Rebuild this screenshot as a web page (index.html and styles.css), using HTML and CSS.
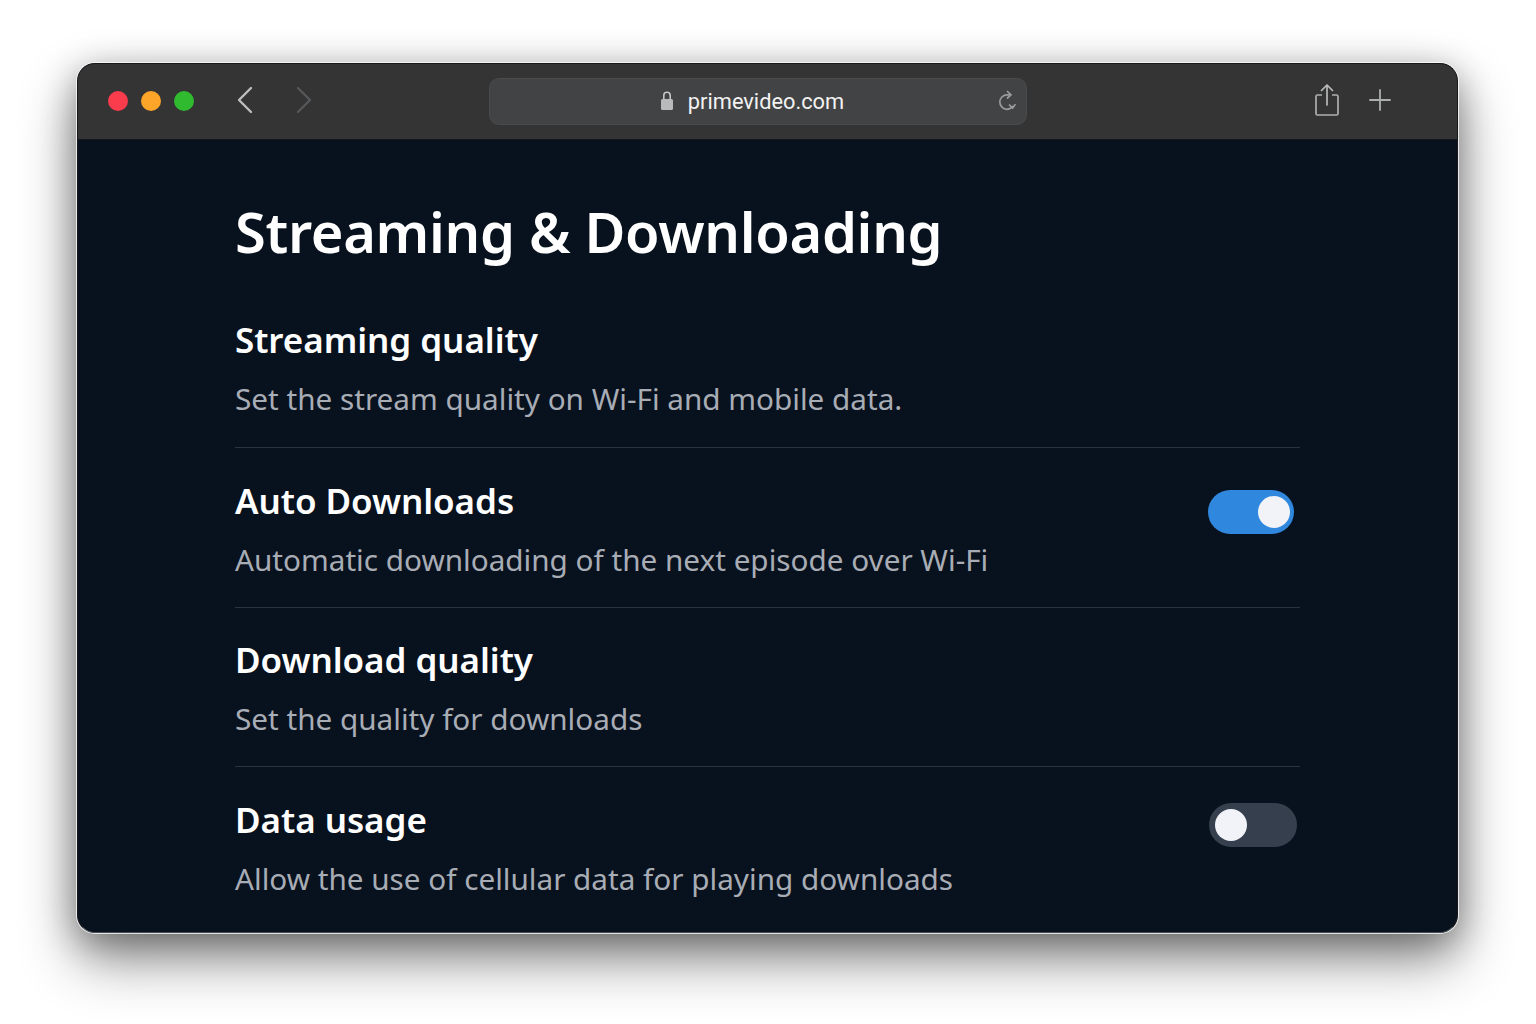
FILE: index.html
```html
<!DOCTYPE html>
<html lang="en">
<head>
<meta charset="utf-8">
<title>Streaming &amp; Downloading</title>
<link rel="stylesheet" href="styles.css">
</head>
<body>
<div class="window">
  <header class="toolbar">
    <div class="lights">
      <span class="light red"></span><span class="light yellow"></span><span class="light green"></span>
    </div>
    <div class="nav">
      <svg class="nav-icon" viewBox="0 0 18 30"><path d="M15 3 3 15l12 12" fill="none" stroke="#bcbdbe" stroke-width="2.4" stroke-linecap="round" stroke-linejoin="round"/></svg>
      <svg class="nav-icon" viewBox="0 0 18 30"><path d="M3 3l12 12L3 27" fill="none" stroke="#565758" stroke-width="2.4" stroke-linecap="round" stroke-linejoin="round"/></svg>
    </div>
    <div class="address">
      <div class="address-main">
        <svg class="lock" viewBox="0 0 14 20"><path d="M3.800 9V4.500a3.200 3.200 0 0 1 6.400 0V9" fill="none" stroke="#c4c5c6" stroke-width="1.600"/><rect x="1" y="8" width="12" height="11" rx="1.500" fill="#b9babb"/></svg>
        <span class="url">primevideo.com</span>
      </div>
      <svg class="reload" viewBox="0 0 20 24"><path d="M13.500 5.900H10A7.200 7.200 0 0 0 10 20.300a7 7 0 0 0 5.500-2.800" fill="none" stroke="#9a9b9c" stroke-width="1.700" stroke-linecap="round"/><path d="M10.500 2.500 14 5.900 10.500 9M12.500 16l3 3.200 2.500-3.400" fill="none" stroke="#9a9b9c" stroke-width="1.700" stroke-linecap="round" stroke-linejoin="round"/></svg>
    </div>
    <div class="actions">
      <svg class="share" viewBox="0 0 26 34"><path d="M8 12H3.500A1.500 1.500 0 0 0 2 13.500V30.500A1.500 1.500 0 0 0 3.500 32h19a1.500 1.500 0 0 0 1.500-1.500V13.500a1.500 1.500 0 0 0-1.500-1.500H18" fill="none" stroke="#adaeaf" stroke-width="1.700"/><path d="M13 22V2.500M7.500 7.500 13 2l5.500 5.500" fill="none" stroke="#b8b9ba" stroke-width="1.700" stroke-linecap="round" stroke-linejoin="round"/></svg>
      <svg class="plus" viewBox="0 0 22 22"><path d="M11 1v20M1 11h20" fill="none" stroke="#adaeaf" stroke-width="1.800" stroke-linecap="round"/></svg>
    </div>
  </header>
  <main class="content">
    <h1 class="page-title">Streaming &amp; Downloading</h1>
    <section class="row first">
      <div class="row-text">
        <h2 class="row-title">Streaming quality</h2>
        <p class="row-desc">Set the stream quality on Wi-Fi and mobile data.</p>
      </div>
    </section>
    <section class="row">
      <div class="row-text">
        <h2 class="row-title">Auto Downloads</h2>
        <p class="row-desc">Automatic downloading of the next episode over Wi-Fi</p>
      </div>
      <span class="switch on"><span class="knob"></span></span>
    </section>
    <section class="row">
      <div class="row-text">
        <h2 class="row-title">Download quality</h2>
        <p class="row-desc">Set the quality for downloads</p>
      </div>
    </section>
    <section class="row last">
      <div class="row-text">
        <h2 class="row-title">Data usage</h2>
        <p class="row-desc">Allow the use of cellular data for playing downloads</p>
      </div>
      <span class="switch off"><span class="knob"></span></span>
    </section>
  </main>
</div>
</body>
</html>
```
FILE: styles.css
```css
* { box-sizing: border-box; }
html, body { margin: 0; height: 100%; }
body {
  background: #fff;
  font-family: "Noto Sans", "Open Sans", sans-serif;
  padding: 63px 0 0 77px;
  overflow: hidden;
}
.window {
  width: 1381px;
  height: 870px;
  border-radius: 18px;
  border: 1px solid #17181b;
  border-bottom-color: #4a4e55;
  background: #08111e;
  overflow: hidden;
  box-shadow: 0 0 0 1px rgba(255,255,255,.75), 0 26px 56px rgba(0,0,0,.46), 0 8px 34px rgba(0,0,0,.3);
  display: flex;
  flex-direction: column;
}
.toolbar {
  height: 76px;
  flex: none;
  background: #343434;
  border-bottom: 1px solid #15171a;
  display: flex;
  align-items: center;
  padding: 0 0 0 30px;
}
.lights { display: flex; gap: 13px; width: 128px; margin-top: -2px; }
.light { width: 20px; height: 20px; border-radius: 50%; }
.red { background: #fb3c4c; }
.yellow { background: #fca528; }
.green { background: #2fba30; }
.nav { display: flex; gap: 41px; width: 253px; margin-top: -3px; }
.nav-icon { width: 18px; height: 30px; }
.address {
  width: 538px;
  height: 47px;
  margin-top: -1px;
  border-radius: 10px;
  background: #424344;
  border: 1px solid #4a4b4c;
  display: flex;
  align-items: center;
  padding: 0 9px 0 0;
}
.address-main {
  flex: 1;
  display: flex;
  align-items: center;
  justify-content: center;
  gap: 14px;
  padding-left: 17px;
}
.lock { width: 14px; height: 20px; }
.url {
  color: #f2f2f2;
  font-family: "Roboto", sans-serif;
  font-size: 21.8px;
}
.reload { width: 20px; height: 24px; }
.actions { display: flex; align-items: center; gap: 29px; margin-left: 287px; margin-top: -3px; }
.share { width: 26px; height: 34px; }
.plus { width: 22px; height: 22px; }
.content {
  flex: 1;
  padding: 53px 157px 0 157px;
}
.page-title {
  margin: 0 0 48px;
  color: #fff;
  font-size: 56px;
  line-height: 76px;
  font-weight: 600;
  letter-spacing: -.33px;
}
.row {
  height: 159.500px;
  border-bottom: 1px solid #2a3342;
  display: flex;
  align-items: flex-start;
  justify-content: space-between;
  padding-top: 29.500px;
}
.row.first { height: 131px; padding-top: 0; }
.row.last { border-bottom: 0; }
.row-title {
  margin: 0 0 16px;
  color: #fff;
  font-size: 35px;
  line-height: 46px;
  font-weight: 600;
  letter-spacing: -.05px;
}
.row-desc {
  margin: 0;
  color: #a8adb5;
  font-size: 29.7px;
  line-height: 40px;
}
.switch {
  display: flex;
  align-items: center;
  border-radius: 22px;
  height: 44px;
}
.switch.on {
  width: 86px;
  background: #2f87de;
  justify-content: flex-end;
  padding-right: 4px;
  margin: 12.500px 6px 0 0;
}
.switch.off {
  width: 88px;
  background: #353f4e;
  padding-left: 6px;
  margin: 6.500px 3px 0 0;
}
.knob { width: 32px; height: 32px; border-radius: 50%; background: #f1f3f8; }
```
